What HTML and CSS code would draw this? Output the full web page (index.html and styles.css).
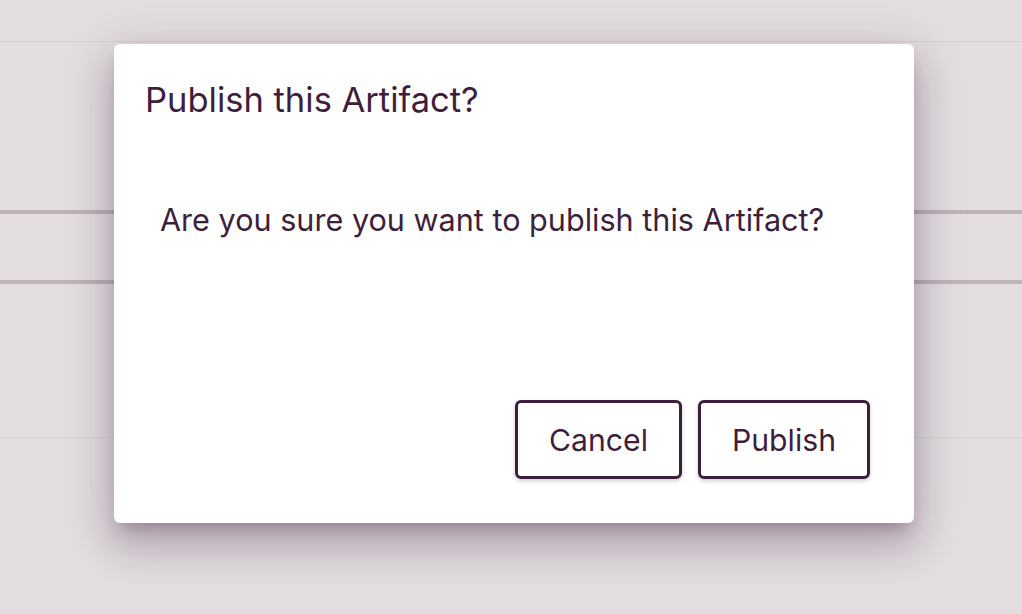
FILE: index.html
```html
<!DOCTYPE html>
<html>
<head>
<meta charset="utf-8">
<link rel="stylesheet" href="styles.css">
</head>
<body>
<div class="page">
  <div class="topbar"></div>
  <div class="row row-a"></div>
  <div class="row row-b"></div>
  <div class="row row-c"></div>
  <div class="row row-d"></div>
</div>
<div class="dialog" role="dialog">
  <h2 class="dialog-title">Publish this Artifact?</h2>
  <div class="dialog-content">Are you sure you want to publish this Artifact?</div>
  <div class="dialog-actions">
    <button class="btn">Cancel</button>
    <button class="btn">Publish</button>
  </div>
</div>
</body>
</html>
```

FILE: styles.css
```css
html, body {
  margin: 0;
  padding: 0;
  height: 100%;
}
body {
  background: #e3dde1;
  font-family: Inter, "Noto Sans", sans-serif;
  color: #3e1f3b;
  overflow: hidden;
  position: relative;
}
.page {
  display: flex;
  flex-direction: column;
}
.topbar {
  height: 41px;
  border-bottom: 1px solid #d6cfd3;
}
.row-a {
  height: 168px;
  border-bottom: 4px solid #bdb3b9;
}
.row-b {
  height: 66px;
  border-bottom: 4px solid #bdb3b9;
}
.row-c {
  height: 153px;
  border-bottom: 1px solid #d6cfd3;
}
.row-d {
  height: 200px;
}
.dialog {
  position: absolute;
  left: 114px;
  top: 44px;
  width: 800px;
  height: 479px;
  box-sizing: border-box;
  background: #fff;
  border-radius: 6px;
  box-shadow: 0 11px 15px -7px rgba(40, 10, 35, 0.25),
              0 24px 38px 3px rgba(40, 10, 35, 0.16),
              0 9px 46px 8px rgba(40, 10, 35, 0.12);
  display: flex;
  flex-direction: column;
  padding: 0 44px 44px 31px;
}
.dialog-title {
  margin: 0;
  padding-top: 34px;
  font-size: 34.5px;
  font-weight: 400;
  line-height: 44px;
}
.dialog-content {
  padding: 80px 0 0 15px;
  font-size: 30.6px;
  line-height: 36px;
  flex: 1;
}
.dialog-actions {
  display: flex;
  justify-content: flex-end;
  gap: 16px;
}
.btn {
  font-family: Inter, "Noto Sans", sans-serif;
  font-size: 30.2px;
  color: #3e1f3b;
  background: #fff;
  border: 3px solid #3e1f3b;
  border-radius: 6px;
  height: 79px;
  padding: 0 31px;
  box-shadow: 0 2px 4px rgba(40, 10, 35, 0.2);
}
```
